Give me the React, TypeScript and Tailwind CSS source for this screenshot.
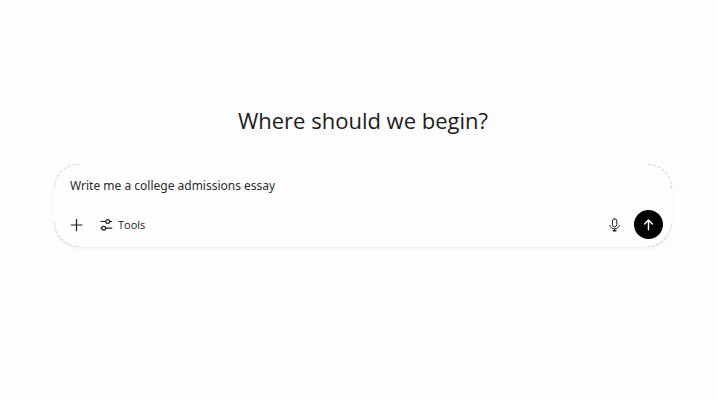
import { useState } from "react";
import type { FormEvent } from "react";

function PlusIcon() {
  return (
    <svg viewBox="0 0 14 14" className="h-3.5 w-3.5" fill="none" stroke="currentColor" strokeWidth="1.2" aria-hidden="true">
      <path d="M6.5 1v12M.8 7h11.6" />
    </svg>
  );
}

function ToolsIcon() {
  return (
    <svg viewBox="0 0 14 14" className="h-3.5 w-3.5" fill="none" stroke="currentColor" strokeWidth="1.2" aria-hidden="true">
      <path d="M.4 3.5h5.3M9.7 3.5h2.5M.4 10.2h1.3M5.7 10.2h6.5" />
      <circle cx="7.7" cy="3.5" r="1.9" />
      <circle cx="3.7" cy="10.2" r="1.9" />
    </svg>
  );
}

function MicIcon() {
  return (
    <svg viewBox="0 0 14 14" className="h-3.5 w-3.5" fill="none" stroke="currentColor" strokeWidth="1" strokeLinecap="round" aria-hidden="true">
      <rect x="4.4" y="0.8" width="4.4" height="8" rx="2.2" />
      <path d="M1.8 7.4c.6 2.2 2.4 3.4 4.8 3.4s4.2-1.2 4.8-3.4M6.6 10.8v1.8" />
      <path d="M5.2 12.7h2.8" strokeWidth="1.4" />
    </svg>
  );
}

function ArrowUpIcon() {
  return (
    <svg viewBox="0 0 14 14" className="h-3.5 w-3.5" fill="none" stroke="currentColor" strokeWidth="1.5" strokeLinecap="round" strokeLinejoin="round" aria-hidden="true">
      <path d="M6.5 11.7V2.2M2.6 6 6.5 2 10.4 6" />
    </svg>
  );
}

export default function App() {
  const [prompt, setPrompt] = useState("Write me a college admissions essay");

  const handleSubmit = (e: FormEvent) => {
    e.preventDefault();
  };

  return (
    <main className="min-h-screen bg-[#fdfdfd] pt-[104px] pr-[45px] pl-[54px] font-['Open_Sans','Noto_Sans',sans-serif] text-[#1c1c1c]">
      <h1 className="text-center text-[22px] leading-8">Where should we begin?</h1>

      <form
        onSubmit={handleSubmit}
        className="relative mt-7 rounded-[28px] bg-[#fefefe] pt-3 pr-[9px] pb-2 pl-2 shadow-[0_3px_3px_rgba(0,0,0,0.04),0_0_1px_rgba(0,0,0,0.1)]"
      >
        {/* Corner outlines */}
        <span className="pointer-events-none absolute top-0 left-0 h-6 w-6 rounded-tl-3xl border-t border-l border-dashed border-[#d6d6d6]" />
        <span className="pointer-events-none absolute top-0 right-0 h-6 w-6 rounded-tr-3xl border-t border-r border-dashed border-[#d6d6d6]" />
        <span className="pointer-events-none absolute bottom-0 left-0 h-6 w-6 rounded-bl-3xl border-b border-l border-dashed border-[#d6d6d6]" />
        <span className="pointer-events-none absolute right-0 bottom-0 h-6 w-6 rounded-br-3xl border-r border-b border-dashed border-[#d6d6d6]" />

        <input
          type="text"
          aria-label="Message"
          value={prompt}
          onChange={(e) => setPrompt(e.target.value)}
          className="block h-5 w-full bg-transparent px-2 font-['Noto_Sans',sans-serif] text-[12px] leading-5 text-[#2b2b2b] outline-none"
        />

        <div className="mt-3.5 flex items-center justify-between">
          <div className="flex items-center gap-4 pl-2">
            <button type="button" aria-label="Add">
              <PlusIcon />
            </button>
            <button type="button" className="flex items-center gap-1 text-[11px] leading-4">
              <ToolsIcon />
              Tools
            </button>
          </div>

          <div className="flex items-center gap-3">
            <button type="button" aria-label="Dictate">
              <MicIcon />
            </button>
            <button
              type="submit"
              aria-label="Send"
              className="flex h-[29px] w-[29px] items-center justify-center rounded-full bg-black text-white"
            >
              <ArrowUpIcon />
            </button>
          </div>
        </div>
      </form>
    </main>
  );
}
